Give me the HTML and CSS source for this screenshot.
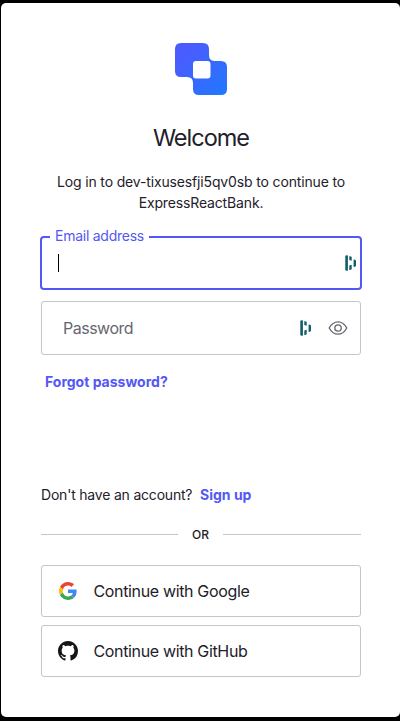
FILE: index.html
```html
<!DOCTYPE html>
<html lang="en">
<head>
<meta charset="utf-8">
<title>Log in | ExpressReactBank</title>
<link rel="stylesheet" href="styles.css">
</head>
<body>
<svg width="0" height="0" class="defs">
  <symbol id="bars" viewBox="0 0 12 16">
    <path d="M.3.700Q1.600 0 2.900.6v14.800Q1.600 16 .3 15.300zM4.300 1.200Q5.500.900 6.700 1.800v3.900L4.300 5zM8.600 4.600Q10 4.500 11 5.500v5.400Q10 12 8.600 11.900zM4.300 10.500l2.400-.7v4.400Q5.500 15.200 4.300 14.900z" fill="#0e5e69"/>
  </symbol>
</svg>
<main class="card">
  <header class="header">
    <svg class="logo" viewBox="0 0 52 52">
      <defs><linearGradient id="lg" x1="0" y1="0" x2="1" y2="1"><stop offset="0.15" stop-color="#4c5bff"/><stop offset="1" stop-color="#2078fe"/></linearGradient></defs>
      <path fill="url(#lg)" fill-rule="evenodd" d="M6 0H28Q34 0 34 6V12Q34 18 40 18H46Q52 18 52 24V46Q52 52 46 52H24Q18 52 18 46V40Q18 34 12 34H6Q0 34 0 28V6Q0 0 6 0ZM21 18Q18 18 18 21V32.500Q18 35.500 21 35.500H32.500Q35.500 35.500 35.500 32.500V21Q35.500 18 32.500 18Z"/>
    </svg>
    <h1 class="title">Welcome</h1>
    <p class="subtitle">Log in to dev-tixusesfji5qv0sb to continue to ExpressReactBank.</p>
  </header>
  <form class="form">
    <div class="field field-active">
      <span class="label">Email address</span>
      <span class="caret"></span>
      <svg class="bars"><use href="#bars"/></svg>
    </div>
    <div class="field">
      <span class="placeholder">Password</span>
      <svg class="bars"><use href="#bars"/></svg>
      <svg class="eye" viewBox="0 0 20 16" fill="none" stroke="#65676e" stroke-width="1.300"><path d="M1.200 8Q4.500 1.800 10 1.800T18.800 8Q15.500 14.200 10 14.200T1.200 8Z"/><circle cx="10" cy="8" r="3.200"/></svg>
    </div>
    <a class="link forgot">Forgot password?</a>
  </form>
  <p class="signup">Don't have an account? <a class="link signup-link">Sign up</a></p>
  <div class="divider"><span class="or">OR</span></div>
  <div class="providers">
    <button class="provider">
      <svg class="icon google" viewBox="0 0 48 48"><path fill="#ea4335" d="M24 9.500c3.540 0 6.710 1.220 9.210 3.600l6.850-6.850C35.900 2.380 30.470 0 24 0 14.620 0 6.510 5.380 2.560 13.220l7.980 6.190C12.430 13.720 17.740 9.500 24 9.500z"/><path fill="#4285f4" d="M46.980 24.550c0-1.570-.15-3.090-.38-4.550H24v9.020h12.940c-.58 2.960-2.260 5.480-4.780 7.180l7.730 6c4.510-4.180 7.090-10.360 7.090-17.650z"/><path fill="#fbbc05" d="M10.530 28.590c-.48-1.450-.76-2.990-.76-4.590s.27-3.140.76-4.590l-7.980-6.190C.92 16.460 0 20.120 0 24s.92 7.540 2.560 10.780z"/><path fill="#34a853" d="M24 48c6.480 0 11.930-2.130 15.890-5.810l-7.730-6c-2.150 1.450-4.920 2.300-8.160 2.300-6.260 0-11.570-4.220-13.470-9.910l-7.980 6.190C6.510 42.620 14.620 48 24 48z"/></svg>
      <span class="provider-text">Continue with Google</span>
    </button>
    <button class="provider">
      <svg class="icon" viewBox="0 0 16 16"><path fill="#161614" d="M8 0C3.580 0 0 3.580 0 8c0 3.540 2.290 6.530 5.470 7.590.4.070.55-.17.55-.38 0-.19-.01-.82-.01-1.490-2.010.37-2.530-.49-2.690-.94-.09-.23-.48-.94-.82-1.130-.28-.15-.68-.52-.01-.53.63-.01 1.080.58 1.230.82.72 1.210 1.870.87 2.330.66.07-.52.28-.87.51-1.070-1.780-.2-3.640-.89-3.640-3.950 0-.87.31-1.590.82-2.150-.08-.2-.36-1.020.08-2.120 0 0 .67-.21 2.200.82.64-.18 1.320-.27 2-.27s1.360.09 2 .27c1.530-1.040 2.200-.82 2.200-.82.44 1.100.16 1.920.08 2.120.51.56.82 1.270.82 2.150 0 3.070-1.870 3.750-3.650 3.950.29.25.54.73.54 1.480 0 1.070-.01 1.930-.01 2.200 0 .21.15.46.55.38A8.010 8.010 0 0 0 16 8c0-4.420-3.580-8-8-8z"/></svg>
      <span class="provider-text">Continue with GitHub</span>
    </button>
  </div>
</main>
</body>
</html>
```
FILE: styles.css
```css
* { box-sizing: border-box; }
body {
  margin: 0;
  height: 721px;
  padding: 3px 0 4px 1px;
  overflow: hidden;
  background: #000;
  color: #1e212a;
  font-family: Inter, "Liberation Sans", sans-serif;
  font-size: 14px;
  letter-spacing: -0.17px;
}
.defs { position: absolute; }
.card {
  height: 714px;
  padding: 40px 39px 40px 40px;
  background: #fff;
  border-radius: 5px;
}
.header { text-align: center; }
.logo { display: block; width: 52px; height: 52px; margin: 0 auto; }
.title { margin: 28px 0 0; font-size: 23.5px; line-height: 29px; font-weight: 400; letter-spacing: -1px; }
.subtitle { margin: 19px 0 0; line-height: 21px; letter-spacing: -0.15px; }
.form { margin-top: 23px; display: flex; flex-direction: column; }
.field {
  position: relative;
  display: flex;
  align-items: center;
  height: 54px;
  padding: 0 12px 0 21px;
  border: 1px solid #c2c5ca;
  border-radius: 3px;
}
.field-active {
  margin: 0 -1px 11px;
  padding: 0 3px 0 16px;
  border: 2px solid #5358f5;
  border-radius: 4px;
}
.label {
  position: absolute;
  left: 8px;
  top: -11px;
  padding: 0 5px;
  background: #fff;
  color: #5358f5;
  line-height: 18px;
  letter-spacing: -0.25px;
}
.caret { width: 1px; height: 18px; background: #000; }
.bars { width: 12px; height: 16px; margin-left: auto; }
.placeholder { color: #65676e; font-size: 16px; letter-spacing: -0.5px; }
.eye { width: 20px; height: 16px; margin-left: 16px; }
.link { color: #5358f5; font-weight: 700; letter-spacing: 0; }
.forgot { margin: 17px 0 0 4px; line-height: 20px; }
.signup { margin: 93px 0 0; line-height: 20px; letter-spacing: -0.2px; }
.signup-link { margin-left: 4px; }
.divider { display: flex; align-items: center; gap: 14px; height: 18px; margin-top: 20px; font-size: 12px; font-weight: 500; letter-spacing: 0; }
.divider::before, .divider::after { content: ""; flex: 1; height: 1px; background: #c2c5ca; }
.divider::before { flex: 0 0 137px; }
.providers { display: grid; gap: 8px; margin-top: 22px; }
.provider {
  display: flex;
  align-items: center;
  gap: 15.5px;
  height: 52px;
  padding: 0 16px;
  background: #fff;
  border: 1px solid #c2c5ca;
  border-radius: 3px;
  color: inherit;
  font: 400 16px Inter, "Liberation Sans", sans-serif;
  letter-spacing: -0.35px;
}
.icon { width: 20px; height: 20px; }
.google { padding: 1px; }
```
